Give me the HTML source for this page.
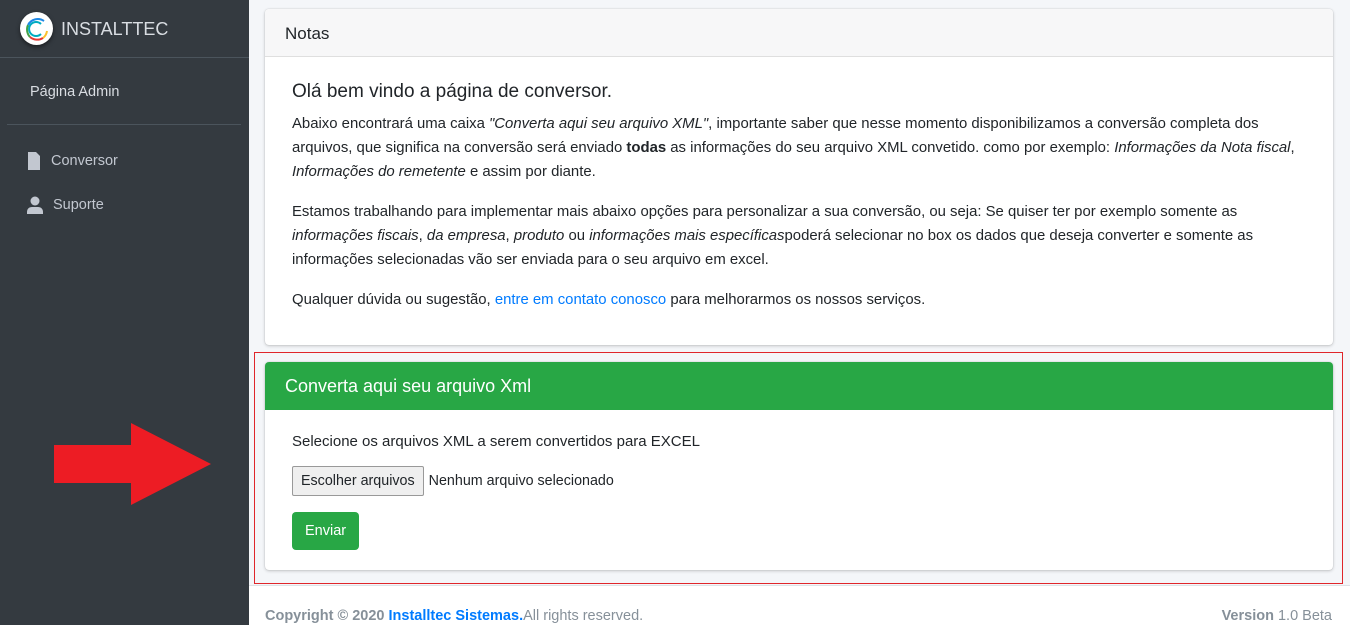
<!DOCTYPE html>
<html><head><meta charset="utf-8"><style>
*{box-sizing:border-box;margin:0;padding:0}
body{width:1350px;height:625px;overflow:hidden;font-family:"Liberation Sans",sans-serif;background:#f4f6f9;color:#212529;position:relative}
.sb{position:absolute;left:0;top:0;width:249px;height:625px;background:#343a40;color:#c2c7d0}
.brand{height:58px;border-bottom:1px solid #4b545c;display:flex;align-items:center;padding-left:20px}
.logo{width:33px;height:33px;border-radius:50%;background:#fff;box-shadow:0 2px 4px rgba(0,0,0,.5);display:flex;align-items:center;justify-content:center}
.brand span{margin-left:8px;font-size:18px;color:#d9dde2;position:relative;top:1px}
.admin{position:absolute;left:30px;top:84px;font-size:14.5px;color:#d9dde2}
.hr{position:absolute;left:7px;top:124px;width:234px;border-top:1px solid #4b545c}
.nav{position:absolute;left:26px;font-size:14.5px;color:#c2c7d0;display:flex;align-items:center}
.nav svg{margin-right:9px}
.card{position:absolute;left:265px;background:#fff;border-radius:4px;box-shadow:0 0 1px rgba(0,0,0,.2),0 1px 3px rgba(0,0,0,.2)}
.c1{top:9px;width:1068px;height:336px}
.c1 .hd{height:48px;background:#f7f7f8;border-bottom:1px solid #dfdfdf;border-radius:4px 4px 0 0;padding:15px 20px;font-size:17px}
.c1 .bd{padding:0 28px 0 27px;font-size:14.9px;line-height:24px}
h3{font-weight:normal;font-size:19px;margin:23px 0 8px}
p{margin-bottom:16px}
a{color:#007bff;text-decoration:none}
.red{position:absolute;left:254px;top:352px;width:1089px;height:232px;border:1px solid #e0262b}
.c2{top:362px;width:1068px;height:208px}
.c2 .hd{height:48px;background:#28a745;color:#fff;border-radius:4px 4px 0 0;padding:14px 20px;font-size:18px}
.c2 .bd{padding:23px 27px;font-size:15px}
.file{margin-top:16px;display:flex;align-items:center;font-size:14.3px}
.fbtn{border:1px solid #999;background:#efefef;border-radius:2px;padding:6px 8px;margin-right:5px}
.go{margin-top:16px;display:inline-block;background:#28a745;color:#fff;border-radius:4px;padding:11px 13px;font-size:14.5px}
.foot{position:absolute;left:249px;top:585px;width:1101px;height:40px;background:#fff;border-top:1px solid #dee2e6;font-size:14.5px;color:#869099;padding:22px 16px 0}
.foot b{font-weight:bold}
</style></head><body>
<div class="sb">
<div class="brand"><div class="logo"><svg width="26" height="26" viewBox="0 0 26 26" fill="none" stroke-width="2"><path d="M20 5A11 11 0 0 0 4 9" stroke="#1e88e5"/><path d="M4 9A11 11 0 0 0 6 21" stroke="#43a047"/><path d="M6 21A11 11 0 0 0 19 22" stroke="#e53935"/><path d="M19 22A11 11 0 0 0 23 15" stroke="#fbc02d"/><path d="M17 8A7 7 0 1 0 17 18" stroke="#00acc1"/></svg></div><span>INSTALTTEC</span></div>
<div class="admin">Página Admin</div>
<div class="hr"></div>
<div class="nav" style="top:152px"><svg width="16" height="18" viewBox="0 0 16 18"><path d="M2 0h8l4 4v14H2z" fill="#c2c7d0"/></svg>Conversor</div>
<div class="nav" style="top:196px"><svg width="18" height="18" viewBox="0 0 18 18"><circle cx="9" cy="5" r="4.5" fill="#c2c7d0"/><path d="M1 18v-2c0-3 2-5 5-5h6c3 0 5 2 5 5v2z" fill="#c2c7d0"/></svg>Suporte</div>
<svg style="position:absolute;left:54px;top:423px" width="157" height="82" viewBox="0 0 157 82"><path d="M0 22H77V0L157 41L77 82V60H0Z" fill="#ed1c24"/></svg>
</div>
<div class="card c1"><div class="hd">Notas</div><div class="bd">
<h3>Olá bem vindo a página de conversor.</h3>
<p>Abaixo encontrará uma caixa <i>"Converta aqui seu arquivo XML"</i>, importante saber que nesse momento disponibilizamos a conversão completa dos arquivos, que significa na conversão será enviado <b>todas</b> as informações do seu arquivo XML convetido. como por exemplo: <i>Informações da Nota fiscal</i>, <i>Informações do remetente</i> e assim por diante.</p>
<p>Estamos trabalhando para implementar mais abaixo opções para personalizar a sua conversão, ou seja: Se quiser ter por exemplo somente as <i>informações fiscais</i>, <i>da empresa</i>, <i>produto</i> ou <i>informações mais específicas</i>poderá selecionar no box os dados que deseja converter e somente as informações selecionadas vão ser enviada para o seu arquivo em excel.</p>
<p>Qualquer dúvida ou sugestão, <a>entre em contato conosco</a> para melhorarmos os nossos serviços.</p>
</div></div>
<div class="red"></div>
<div class="card c2"><div class="hd">Converta aqui seu arquivo Xml</div><div class="bd">
<div>Selecione os arquivos XML a serem convertidos para EXCEL</div>
<div class="file"><span class="fbtn">Escolher arquivos</span>Nenhum arquivo selecionado</div>
<div class="go">Enviar</div>
</div></div>
<div class="foot"><b>Copyright © 2020 <a>Installtec Sistemas.</a></b>All rights reserved.<span style="position:absolute;right:18px"><b>Version</b> 1.0 Beta</span></div>
</body></html>
